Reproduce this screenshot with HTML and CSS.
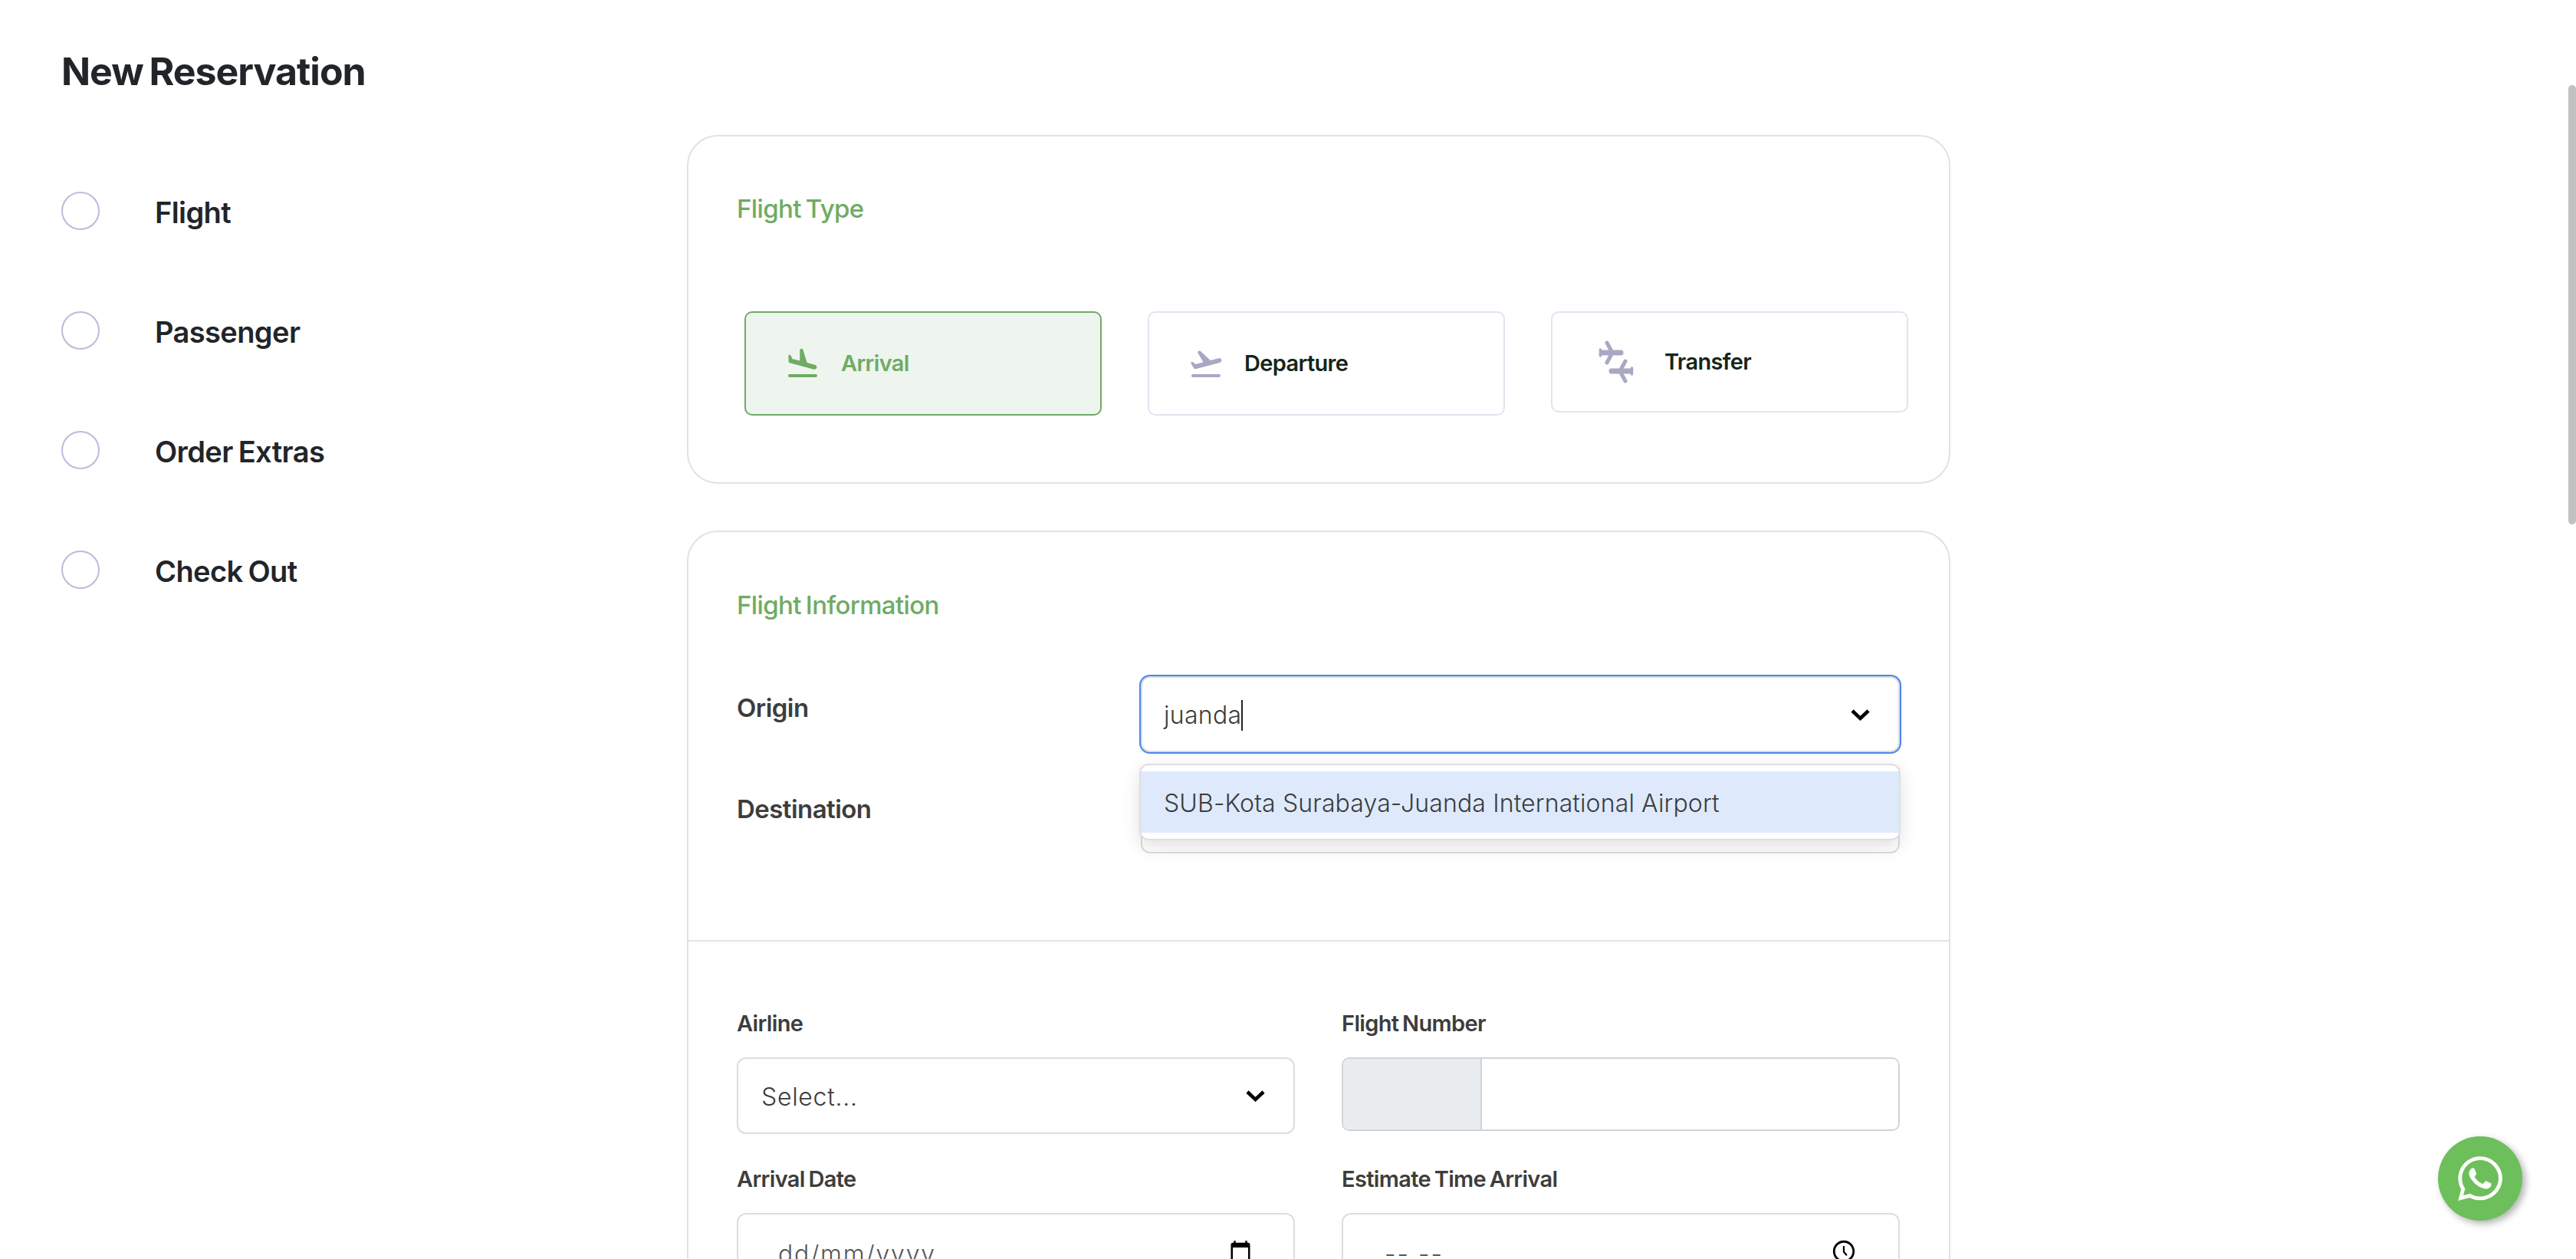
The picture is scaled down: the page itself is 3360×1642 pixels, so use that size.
FILE: index.html
```html
<!DOCTYPE html>
<html lang="en">
<head>
<meta charset="utf-8">
<title>New Reservation</title>
<link rel="stylesheet" href="styles.css">
</head>
<body>
<div class="page">
  <h1 class="page-title">New Reservation</h1>
  <div class="layout">
    <ul class="steps">
      <li class="step"><span class="step-dot"></span><span class="step-name">Flight</span></li>
      <li class="step"><span class="step-dot"></span><span class="step-name">Passenger</span></li>
      <li class="step"><span class="step-dot"></span><span class="step-name">Order Extras</span></li>
      <li class="step"><span class="step-dot"></span><span class="step-name">Check Out</span></li>
    </ul>
    <main class="main">
      <section class="card card-type">
        <h2 class="card-title">Flight Type</h2>
        <div class="options">
          <div class="option option-active">
            <svg class="option-icon" viewBox="0 0 24 24"><path d="M20.5 19h-17c-.55 0-1 .45-1 1s.45 1 1 1h17c.55 0 1-.45 1-1s-.45-1-1-1zM3.51 11.61l15.83 4.24c.8.21 1.62-.26 1.84-1.06.21-.8-.26-1.62-1.06-1.84l-5.31-1.42-2.58-8.45c-.11-.36-.39-.63-.75-.73-.68-.18-1.35.33-1.35 1.04v6.88L5.15 8.95l-.77-1.92c-.12-.29-.36-.51-.67-.59L3.4 6.36c-.32-.08-.63.16-.63.49v3.8c0 .45.3.84.74.96z"/></svg>
            <span class="option-name">Arrival</span>
          </div>
          <div class="option">
            <svg class="option-icon" viewBox="0 0 24 24"><path d="M20.5 19h-17c-.55 0-1 .45-1 1s.45 1 1 1h17c.55 0 1-.45 1-1s-.45-1-1-1zM22.07 9.64c-.22-.8-1.04-1.27-1.84-1.06L14.92 10 8.46 3.98c-.27-.26-.66-.35-1.02-.25-.68.19-1 .97-.65 1.58l3.44 5.96-4.97 1.2-1.57-1.24c-.25-.19-.57-.26-.87-.18l-.33.09c-.32.08-.47.45-.3.73l1.88 3.25c.23.39.69.58 1.12.47L21 11.49c.81-.23 1.28-1.05 1.07-1.85z"/></svg>
            <span class="option-name">Departure</span>
          </div>
          <div class="option option-short">
            <svg class="option-icon-wide" viewBox="0 0 70 56">
              <g class="plane">
                <path class="plane-body" d="M15 16H39"/>
                <path class="plane-wing" d="M21 3L28 16L21 29"/>
                <path class="plane-tail" d="M12.5 12V20"/>
              </g>
              <g class="plane" transform="rotate(180 33 28)">
                <path class="plane-body" d="M15 16H39"/>
                <path class="plane-wing" d="M21 3L28 16L21 29"/>
                <path class="plane-tail" d="M12.5 12V20"/>
              </g>
            </svg>
            <span class="option-name">Transfer</span>
          </div>
        </div>
      </section>

      <section class="card card-info">
        <div class="info-top">
          <h2 class="card-title">Flight Information</h2>
          <div class="route-row">
            <span class="route-label">Origin</span>
            <div class="control control-focus">
              <span class="control-text">juanda<span class="caret"></span></span>
              <svg class="chevron" viewBox="0 0 27 16"><path d="M3 3L13.5 13L24 3"/></svg>
              <div class="menu"><div class="menu-option">SUB-Kota Surabaya-Juanda International Airport</div></div>
            </div>
          </div>
          <div class="route-row">
            <span class="route-label">Destination</span>
            <div class="control">
              <span class="control-text">Select...</span>
              <svg class="chevron" viewBox="0 0 27 16"><path d="M3 3L13.5 13L24 3"/></svg>
            </div>
          </div>
        </div>
        <div class="info-grid">
          <div class="field">
            <label class="field-label">Airline</label>
            <div class="control control-airline">
              <span class="control-text">Select...</span>
              <svg class="chevron" viewBox="0 0 27 16"><path d="M3 3L13.5 13L24 3"/></svg>
            </div>
          </div>
          <div class="field">
            <label class="field-label">Flight Number</label>
            <div class="input-group">
              <span class="input-addon"></span>
              <span class="input-main"></span>
            </div>
          </div>
          <div class="field">
            <label class="field-label">Arrival Date</label>
            <div class="native-input">
              <span class="native-text">dd/mm/yyyy</span>
              <svg class="cal-icon" viewBox="0 0 24 24"><path d="M20 3h-1V1h-2v2H7V1H5v2H4c-1.1 0-2 .9-2 2v16c0 1.1.9 2 2 2h16c1.1 0 2-.9 2-2V5c0-1.1-.9-2-2-2zm0 18H4V8h16v13z"/></svg>
            </div>
          </div>
          <div class="field">
            <label class="field-label">Estimate Time Arrival</label>
            <div class="native-input">
              <span class="native-text native-time">-- --</span>
              <svg class="clock-icon" viewBox="0 0 24 24"><path d="M11.99 2C6.47 2 2 6.48 2 12s4.47 10 9.99 10C17.52 22 22 17.52 22 12S17.52 2 11.99 2zM12 20c-4.42 0-8-3.58-8-8s3.58-8 8-8 8 3.58 8 8-3.58 8-8 8z"/><path d="M11.2 7h1.5v5.2l2.6 3-1.1 1-3-3.4z"/></svg>
            </div>
          </div>
        </div>
      </section>
    </main>
  </div>
</div>

<a class="whatsapp" href="#" aria-label="WhatsApp">
  <svg viewBox="0 0 448 512"><path d="M380.9 97.1C339 55.1 283.2 32 223.9 32c-122.4 0-222 99.6-222 222 0 39.1 10.2 77.3 29.6 111L0 480l117.7-30.9c32.4 17.7 68.9 27 106.1 27h.1c122.3 0 224.1-99.6 224.1-222 0-59.3-25.2-115-67.1-157zm-157 341.6c-33.2 0-65.7-8.9-94-25.7l-6.7-4-69.8 18.3L72 359.2l-4.4-7c-18.5-29.4-28.2-63.3-28.2-98.2 0-101.7 82.8-184.5 184.6-184.5 49.3 0 95.6 19.2 130.4 54.1 34.8 34.9 56.2 81.2 56.1 130.5 0 101.8-84.9 184.6-186.6 184.6zm101.2-138.2c-5.5-2.8-32.8-16.2-37.9-18-5.1-1.9-8.8-2.8-12.5 2.8-3.7 5.6-14.3 18-17.6 21.8-3.2 3.7-6.5 4.2-12 1.4-32.6-16.3-54-29.1-75.5-66-5.7-9.8 5.7-9.1 16.3-30.3 1.8-3.7.9-6.9-.5-9.7-1.4-2.8-12.5-30.1-17.1-41.2-4.5-10.8-9.1-9.3-12.5-9.5-3.2-.2-6.9-.2-10.6-.2-3.7 0-9.7 1.4-14.8 6.9-5.1 5.6-19.4 19-19.4 46.3 0 27.3 19.9 53.7 22.6 57.4 2.8 3.7 39.1 59.7 94.8 83.8 35.2 15.2 49 16.5 66.6 13.9 10.7-1.6 32.8-13.4 37.4-26.4 4.6-13 4.6-24.1 3.2-26.4-1.3-2.5-5-3.9-10.5-6.6z"/></svg>
</a>
<div class="scroll-thumb"></div>
</body>
</html>
```
FILE: styles.css
```css
* { box-sizing: border-box; }
html, body { margin: 0; height: 1642px; overflow: hidden; background: #fff; }
body { font-family: Inter, "Open Sans", sans-serif; color: #212529; position: relative; }

.page { padding: 0 0 0 80px; }
.page-title { margin: 0; height: 176px; padding-top: 63px; font-size: 50px; line-height: 60px; font-weight: 700; letter-spacing: -1px; word-spacing: -3px; color: #212529; }

.layout { display: flex; }
.steps { list-style: none; margin: 0; padding: 74px 0 0; width: 816px; flex: none; }
.step { display: flex; align-items: center; height: 50px; margin-bottom: 106px; }
.step-dot { width: 50px; height: 50px; border: 2px solid #bdbadd; border-radius: 50%; flex: none; }
.step-name { margin-left: 72px; padding-top: 4px; font-size: 38px; line-height: 50px; font-weight: 600; letter-spacing: -.6px; word-spacing: -2px; }

.main { width: 1648px; flex: none; }
.card { border: 2px solid #e2e2e2; border-radius: 40px; background: #fff; }
.card-type { height: 455px; padding: 70px 0 0 63px; margin-bottom: 61px; }
.card-title { margin: 0; font-size: 33px; line-height: 48px; font-weight: 500; color: #6fab64; letter-spacing: -.65px; word-spacing: -2px; }

.options { display: flex; align-items: flex-start; gap: 60px; margin: 110px 0 0 10px; }
.option { display: flex; align-items: center; width: 466px; height: 136px; padding-left: 50px; border: 2px solid #e4e3f0; border-radius: 10px; background: #fff; }
.option-short { height: 132px; padding-left: 50px; }
.option-active { border-color: #6fab64; background: #edf5ee; }
.option-icon { width: 48px; height: 48px; flex: none; fill: #a9a8c3; }
.option-active .option-icon { fill: #6fab64; }
.option-icon-wide { width: 70px; height: 56px; flex: none; }
.plane-body { fill: none; stroke: #a9a8c3; stroke-width: 7; stroke-linecap: round; }
.plane-wing { fill: none; stroke: #a9a8c3; stroke-width: 5; stroke-linecap: round; stroke-linejoin: round; }
.plane-tail { fill: none; stroke: #a9a8c3; stroke-width: 3.5; stroke-linecap: round; }
.option-name { margin-left: 26px; font-size: 29px; line-height: 40px; font-weight: 600; letter-spacing: -.65px; color: #15251a; }
.option-active .option-name { color: #6fab64; }

.card-info { height: 1200px; border-radius: 40px; }
.info-top { padding: 71px 63px 0; height: 534px; border-bottom: 2px solid #e4e4e4; }
.route-row { display: flex; align-items: flex-start; margin-top: 33px; }
.card-title + .route-row { margin-top: 69px; }
.route-label { width: 527px; flex: none; padding-top: 17px; font-size: 33px; line-height: 48px; font-weight: 600; letter-spacing: -.55px; color: #3d3d3d; }

.control { position: relative; display: flex; align-items: center; justify-content: space-between; width: 990px; height: 99px; padding: 0 36px 0 28px; border: 2px solid #dcdddd; border-radius: 12px; background: #fff; }
.control-focus { box-shadow: 0 0 0 2px #4a86f0; }
.control-airline { width: 728px; height: 100px; padding-left: 30px; }
.control-text { padding-top: 3px; font-size: 32px; line-height: 48px; font-weight: 300; letter-spacing: .3px; color: #3c3c3c; position: relative; }
.control-airline .control-text { letter-spacing: .7px; }
.caret { display: inline-block; width: 2px; height: 40px; background: #222; vertical-align: -9px; }
.chevron { width: 27px; height: 16px; flex: none; }
.chevron path { fill: none; stroke: #000; stroke-width: 4.5; }

.menu { position: absolute; z-index: 2; top: 112px; left: -4px; right: -3px; padding: 8px 0; border: 2px solid #dedede; border-radius: 12px; background: #fff; box-shadow: 0 8px 24px rgba(0, 0, 0, .12); }
.menu-option { height: 80px; padding-left: 30px; font-size: 32px; line-height: 83px; font-weight: 300; letter-spacing: .13px; color: #3c3c3c; background: #deeafc; }

.info-grid { display: grid; grid-template-columns: 728px 728px; column-gap: 61px; row-gap: 35px; padding: 83px 63px 0; }
.field-label { display: block; margin-bottom: 20px; font-size: 29px; line-height: 48px; font-weight: 600; letter-spacing: -.65px; word-spacing: -2px; color: #3d3d3d; }
.input-group { display: flex; height: 96px; margin-top: 3px; border: 2px solid #ced4da; border-radius: 10px; overflow: hidden; }
.input-addon { width: 181px; flex: none; background: #e9ecef; border-right: 2px solid #ced4da; }
.input-main { flex: 1; background: #fff; }

.native-input { display: flex; align-items: center; justify-content: space-between; height: 100px; margin-top: 1px; padding: 0 54px 0 52px; border: 2px solid #dcdddd; border-radius: 12px; background: #fff; }
.native-text { padding-top: 8px; font-size: 32px; line-height: 48px; font-weight: 300; letter-spacing: 1.8px; color: #555; }
.native-time { padding-left: 2px; letter-spacing: 2px; }
.cal-icon { width: 30px; height: 30px; flex: none; }
.clock-icon { width: 34px; height: 34px; flex: none; }

.whatsapp { position: absolute; left: 3180px; top: 1482px; width: 110px; height: 110px; display: flex; align-items: center; justify-content: center; border-radius: 50%; background: #6dbf5b; box-shadow: 4px 4px 10px rgba(0, 0, 0, .3); }
.whatsapp svg { width: 58px; height: 66px; fill: #fff; }
.scroll-thumb { position: absolute; left: 3350px; top: 111px; width: 10px; height: 573px; border-radius: 5px; background: #c1c1c1; }
```
